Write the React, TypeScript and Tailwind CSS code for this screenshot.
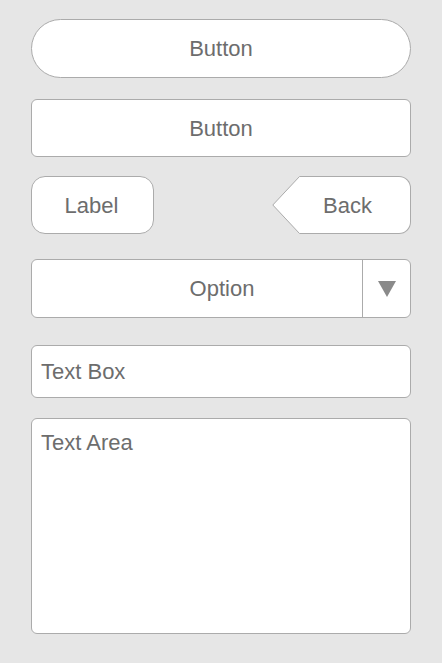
export default function App() {
  const font = { fontFamily: '"Liberation Sans", Arial, sans-serif' };
  return (
    <div className="w-[442px] h-[663px] bg-[#e6e6e6] px-[31px] pt-[19px] text-[22px] text-[#6d6d6d]" style={font}>
      <button className="w-full h-[59px] rounded-full border border-[#ababab] bg-white flex items-center justify-center">
        Button
      </button>
      <button className="mt-[21px] w-full h-[58px] rounded-[6px] border border-[#ababab] bg-white flex items-center justify-center">
        Button
      </button>
      <div className="mt-[19px] flex justify-between h-[58px]">
        <div className="w-[123px] rounded-[14px] border border-[#ababab] bg-white flex items-center justify-center pr-[2px]">
          Label
        </div>
        <div className="flex h-full">
          <svg width="28" height="58" viewBox="0 0 28 58" className="block">
            <path d="M28 0.5 L27.5 0.5 L0.8 29 L27.5 57.5 L28 57.5 Z" fill="#fff" />
            <path d="M28 0.5 L27.5 0.5 L0.8 29 L27.5 57.5 L28 57.5" fill="none" stroke="#ababab" strokeWidth="1" />
          </svg>
          <div className="w-[111px] rounded-r-[12px] border border-l-0 border-[#ababab] bg-white flex items-center justify-center pr-[15px]">
            Back
          </div>
        </div>
      </div>
      <div className="mt-[25px] w-full h-[59px] rounded-[6px] border border-[#ababab] bg-white flex">
        <div className="flex-1 flex items-center justify-center pl-[50px]">Option</div>
        <div className="w-[48px] border-l border-[#ababab] flex items-center justify-center">
          <svg width="18" height="16" viewBox="0 0 18 16">
            <path d="M0 0 H18 L9 16 Z" fill="#8a8a8a" />
          </svg>
        </div>
      </div>
      <div className="mt-[27px] w-full h-[53px] rounded-[6px] border border-[#ababab] bg-white flex items-center px-[9px]">
        Text Box
      </div>
      <div className="mt-[20px] w-full h-[216px] rounded-[6px] border border-[#ababab] bg-white px-[9px] pt-[12px] leading-[24px]">
        Text Area
      </div>
    </div>
  );
}
